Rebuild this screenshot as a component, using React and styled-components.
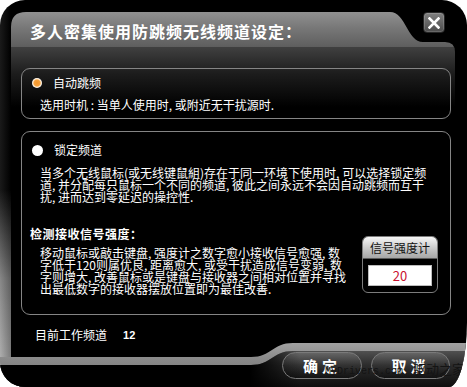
import React from 'react';
import styled, { createGlobalStyle } from 'styled-components';

const GlobalStyle = createGlobalStyle`
  html, body {
    margin: 0;
    padding: 0;
    background: #fff;
  }
  body {
    font-family: "Noto Sans CJK SC", "Noto Sans", sans-serif;
  }
`;

const PANEL_SHAPE =
  "path('M 0 15 Q 0 0 15 0 L 379 0 C 395 0 396 30 412 30 L 434 30 Q 444 30 444 40 L 444 317 Q 444 331 430 331 L 281 331 C 266 331 266 345 251 345 L 15 345 Q 0 345 0 330 Z')";
const BASE_SHAPE =
  "path('M 0 44 L 0 14 L 251 14 C 272 14 272 0 293 0 L 467 0 L 467 44 Z')";
const BASE_INNER_SHAPE =
  "path('M 0 36 L 0 14 L 251 14 C 272 14 272 0 293 0 L 467 0 L 467 36 Z')";

export default function App() {
  return (
    <>
      <GlobalStyle />
      <Window>
        <Panel>
          <TitleBar>
            <TitleText>多人密集使用防跳频无线频道设定：</TitleText>
          </TitleBar>
          <Content>
            <OptionBox $pad='6px 0 5px'>
              <OptionHead>
                <Radio $checked />
                <OptionLabel>自动跳频</OptionLabel>
              </OptionHead>
              <Desc>选用时机 : 当单人使用时, 或附近无干扰源时.</Desc>
            </OptionBox>

            <OptionBox $pad='10px 0 19px' $gap='12px'>
              <OptionHead>
                <Radio />
                <OptionLabel>锁定频道</OptionLabel>
              </OptionHead>
              <Para>
                当多个无线鼠标(或无线键鼠組)存在于同一环境下使用时, 可以选择锁定频<br />
                道, 并分配每只鼠标一个不同的频道, 彼此之间永远不会因自动跳频而互干<br />
                扰, 进而达到零延迟的操控性.
              </Para>

              <MeterRow>
                <div>
                  <SectionHead>检测接收信号强度：</SectionHead>
                  <Para $top='5px'>
                    移动鼠标或敲击键盘, 强度计之数字愈小接收信号愈强, 数<br />
                    字低于120则属优良, 距离愈大, 或受干扰造成信号变弱, 数<br />
                    字则增大, 改善鼠标或是键盘与接收器之间相对位置并寻找<br />
                    出最低数字的接收器摆放位置即为最佳改善.
                  </Para>
                </div>
                <Meter>
                  <MeterHead>信号强度计</MeterHead>
                  <MeterBody>
                    <MeterValue>20</MeterValue>
                  </MeterBody>
                </Meter>
              </MeterRow>
            </OptionBox>

            <StatusRow>
              <span>目前工作频道</span>
              <StatusValue>12</StatusValue>
            </StatusRow>
          </Content>
        </Panel>

        <BaseBar>
          <PillButton $w={80}>确定</PillButton>
          <PillButton $w={79}>取消</PillButton>
        </BaseBar>

        <CloseButton>
          <svg width='12' height='12' viewBox='0 0 12 12'>
            <path d='M1.5 1.5 L10.5 10.5 M10.5 1.5 L1.5 10.5' stroke='#fff' strokeWidth='2.6' strokeLinecap='square' />
          </svg>
        </CloseButton>

        <Watermark>
          <span className='latin'>MyDrivers.com</span>
          <span>驱动之家</span>
        </Watermark>
      </Window>
    </>
  );
}

const Window = styled.div`
  position: relative;
  width: 467px;
  height: 387px;
  box-sizing: border-box;
  padding: 12px 12px 0 11px;
  display: flex;
  flex-direction: column;
  overflow: hidden;
  border-radius: 25px 25px 18px 25px / 25px 25px 65px 25px;
  background:
    linear-gradient(to right, rgba(0, 0, 0, 0) 11px, #000 11px),
    linear-gradient(to right, rgba(255, 255, 255, 0.1) 0, rgba(0, 0, 0, 0.25) 11px),
    linear-gradient(to bottom, #000 190px, #7c7c7c 280px, #a4a4a4 355px);
`;

const Panel = styled.div`
  flex: none;
  height: 345px;
  display: flex;
  flex-direction: column;
  clip-path: ${PANEL_SHAPE};
  background: linear-gradient(
    to bottom,
    #909090 0,
    #767676 17px,
    #5e5e5e 35px,
    #404040 35px,
    #1c1c1c 62px,
    #000 95px
  );
`;

const TitleBar = styled.div`
  height: 35px;
  box-sizing: border-box;
  padding: 2px 0 0 19px;
  display: flex;
  align-items: center;
`;

const TitleText = styled.div`
  color: #fff;
  font-size: 16px;
  font-weight: 700;
  letter-spacing: 1px;
  line-height: 20px;
  white-space: nowrap;
`;

const Content = styled.div`
  display: flex;
  flex-direction: column;
  padding: 21px 4px 0 10px;
`;

const OptionBox = styled.div`
  border: 1px solid #858585;
  border-radius: 9px;
  padding: ${p => p.$pad};
  margin-top: ${p => p.$gap || '0'};
  color: #fff;
  font-size: 12px;
`;

const OptionHead = styled.div`
  display: flex;
  align-items: center;
  gap: 11px;
  height: 16px;
  padding-left: 10px;
`;

const Radio = styled.span`
  width: ${p => (p.$checked ? '10px' : '11px')};
  height: ${p => (p.$checked ? '10px' : '11px')};
  border-radius: 50%;
  flex: none;
  background: ${p =>
    p.$checked
      ? 'radial-gradient(circle, #f4952a 0, #f7a23c 3px, #ffe2bd 4px, #fff 5px)'
      : '#fff'};
`;

const OptionLabel = styled.span`
  line-height: 16px;
`;

const Desc = styled.div`
  margin-top: 6px;
  padding-left: 18px;
  line-height: 16px;
  white-space: nowrap;
`;

const Para = styled.div`
  margin-top: ${p => p.$top || '9px'};
  padding-left: 18px;
  line-height: 12px;
  white-space: nowrap;
`;

const MeterRow = styled.div`
  display: flex;
  justify-content: space-between;
  align-items: flex-end;
  margin-top: 23px;
  padding-right: 12px;
`;

const SectionHead = styled.div`
  padding-left: 8px;
  font-weight: 700;
  line-height: 16px;
  letter-spacing: 0.5px;
`;

const Meter = styled.div`
  width: 76px;
  height: 57px;
  margin-bottom: 2px;
  box-sizing: border-box;
  border: 1px solid #7c7c7c;
  border-radius: 6px;
  overflow: hidden;
  background: #000;
  display: flex;
  flex-direction: column;
`;

const MeterHead = styled.div`
  height: 21px;
  line-height: 21px;
  text-align: center;
  color: #111;
  font-size: 12px;
  background: linear-gradient(to bottom, #f6f6f6, #c4c4c4 60%, #a6a6a6);
  border-bottom: 1px solid #5a5a5a;
`;

const MeterBody = styled.div`
  flex: 1;
  padding: 6px 5px 0;
`;

const MeterValue = styled.div`
  height: 21px;
  box-sizing: border-box;
  border: 1px solid #bdbdbd;
  background: #fff;
  color: #c8102e;
  font-size: 13px;
  line-height: 19px;
  text-align: center;
`;

const StatusRow = styled.div`
  margin-top: 12px;
  padding-left: 14px;
  display: flex;
  align-items: center;
  gap: 16px;
  color: #fff;
  font-size: 12px;
  line-height: 16px;
`;

const StatusValue = styled.span`
  font-family: "Liberation Sans", Arial, sans-serif;
  font-size: 11px;
  font-weight: 700;
`;

const BaseBar = styled.div`
  position: relative;
  flex: none;
  height: 44px;
  margin: -14px -12px 0 -11px;
  box-sizing: border-box;
  padding: 9px 17px 0 0;
  display: flex;
  justify-content: flex-end;
  align-items: flex-start;
  gap: 9px;
  clip-path: ${BASE_SHAPE};
  background: linear-gradient(to bottom, #a2a2a2 0, #8a8a8a 16px, #6e6e6e 44px);

  &::before {
    content: '';
    position: absolute;
    left: 0;
    right: 0;
    top: 8px;
    bottom: 0;
    clip-path: ${BASE_INNER_SHAPE};
    background:
      linear-gradient(to right, #000 0, #000 250px, rgba(0, 0, 0, 0) 300px),
      linear-gradient(to bottom, #505050 0, #2c2c2c 14px, #0e0e0e 36px);
  }
`;

const PillButton = styled.div`
  position: relative;
  z-index: 1;
  width: ${p => p.$w}px;
  height: 27px;
  box-sizing: border-box;
  border: 1px solid #7a7a7a;
  border-radius: 14px;
  background: linear-gradient(
    to bottom,
    rgba(255, 255, 255, 0.14),
    rgba(255, 255, 255, 0.03) 50%,
    rgba(0, 0, 0, 0.3)
  );
  display: flex;
  align-items: center;
  justify-content: center;
  color: #fff;
  font-size: 15px;
  font-weight: 700;
  letter-spacing: 4px;
`;

const CloseButton = styled.div`
  position: absolute;
  top: 12px;
  left: 423px;
  width: 22px;
  height: 21px;
  box-sizing: border-box;
  border: 1px solid #262626;
  border-radius: 4px;
  background: linear-gradient(to bottom, #808080, #4c4c4c);
  box-shadow: inset 0 0 0 1px rgba(255, 255, 255, 0.15);
  display: flex;
  align-items: center;
  justify-content: center;
`;

const Watermark = styled.div`
  position: absolute;
  left: 325px;
  top: 361px;
  z-index: 2;
  display: flex;
  align-items: baseline;
  gap: 10px;
  color: #141414;
  font-size: 13px;
  line-height: 16px;
  white-space: nowrap;
  .latin {
    font-family: "Liberation Mono", monospace;
    font-size: 10px;
  }
`;
